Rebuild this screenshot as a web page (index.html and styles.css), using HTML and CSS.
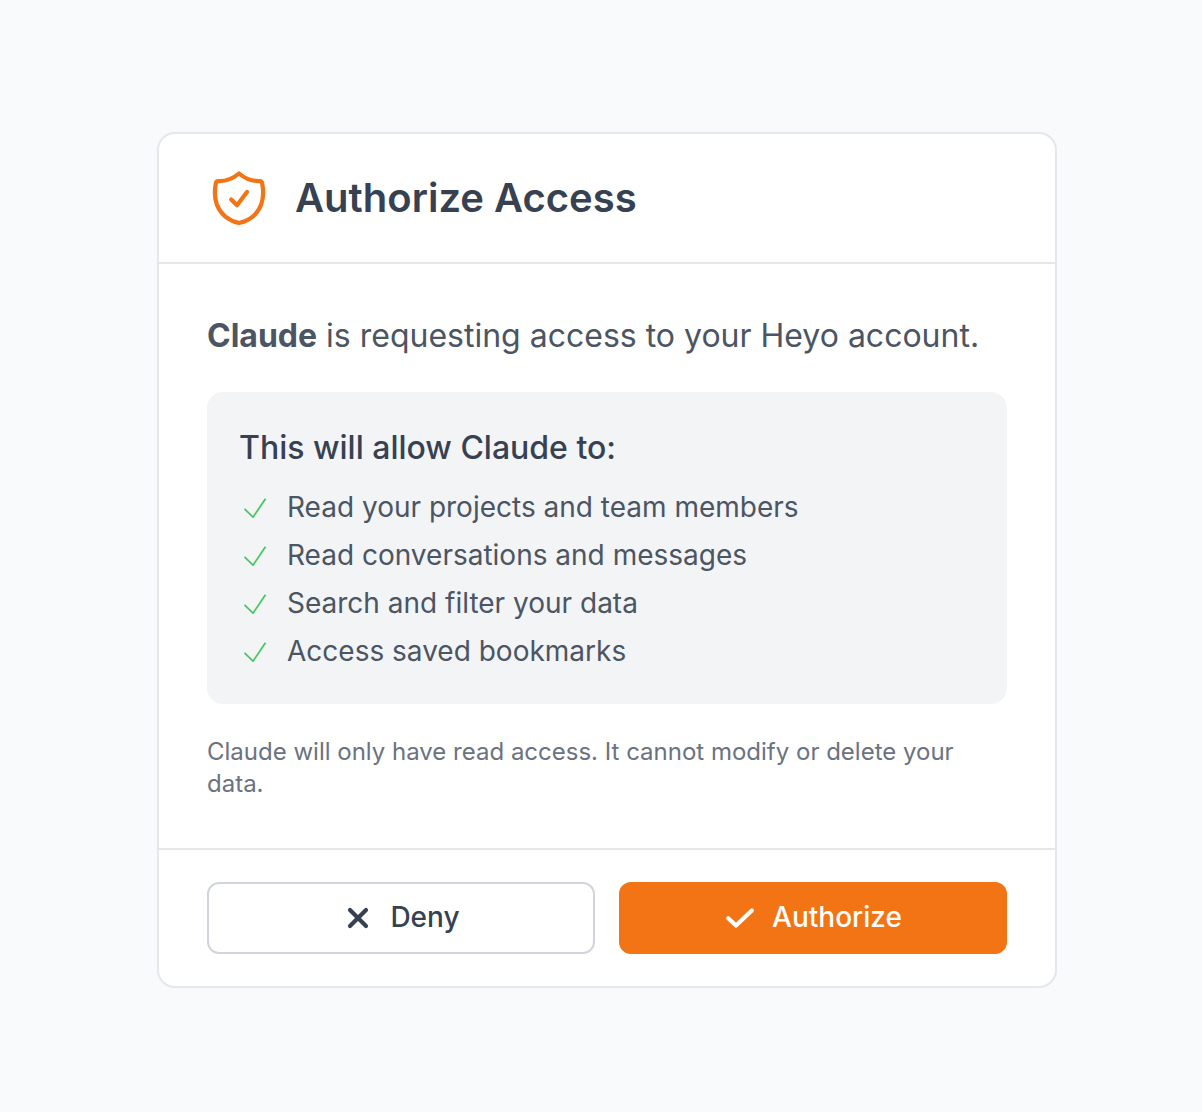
FILE: index.html
```html
<!DOCTYPE html>
<html lang="en">
<head>
    <meta charset="UTF-8">
    <meta name="viewport" content="width=device-width, initial-scale=1.0">
    <title>Authorize Access</title>
    <link rel="stylesheet" href="styles.css">
</head>
<body>
    <main class="card">
        <header class="card-header">
            <svg class="shield" viewBox="0 0 64 64" fill="none">
                <path d="M32 7.500C26 12.500 18.500 15.500 11 15Q9.500 15 9 16.500C7.200 25 7.600 32.500 9.800 38.500C13.500 48 21 54.500 32 57C43 54.500 50.500 48 54.200 38.500C56.400 32.500 56.800 25 55 16.500Q54.500 15 53 15C45.500 15.500 38 12.500 32 7.500Z"/>
                <path d="M24.200 33.500L30 39.300L40 26"/>
            </svg>
            <h1>Authorize Access</h1>
        </header>

        <section class="card-body">
            <p class="request"><strong>Claude</strong> is requesting access to your Heyo account.</p>

            <div class="permissions">
                <h2>This will allow Claude to:</h2>
                <ul>
                    <li><svg class="tick" viewBox="0 0 32 32"><path d="M5.500 16.800L14 25.200L26.500 6.800"/></svg>Read your projects and team members</li>
                    <li><svg class="tick" viewBox="0 0 32 32"><path d="M5.500 16.800L14 25.200L26.500 6.800"/></svg>Read conversations and messages</li>
                    <li><svg class="tick" viewBox="0 0 32 32"><path d="M5.500 16.800L14 25.200L26.500 6.800"/></svg>Search and filter your data</li>
                    <li><svg class="tick" viewBox="0 0 32 32"><path d="M5.500 16.800L14 25.200L26.500 6.800"/></svg>Access saved bookmarks</li>
                </ul>
            </div>

            <p class="note">Claude will only have read access. It cannot modify or delete your data.</p>
        </section>

        <footer class="card-footer">
            <button class="btn btn-deny" type="button">
                <svg class="btn-icon" viewBox="0 0 32 32"><path d="M8 8L24 24M24 8L8 24"/></svg>
                Deny
            </button>
            <button class="btn btn-authorize" type="button">
                <svg class="btn-icon" viewBox="0 0 32 32"><path d="M4.200 16.200L12 23.600L27.800 8.400"/></svg>
                Authorize
            </button>
        </footer>
    </main>
</body>
</html>
```
FILE: styles.css
```css
* {
    box-sizing: border-box;
}
body {
    margin: 0;
    padding: 132px 145px 0 157px;
    min-height: 100vh;
    background-color: #f9fafb;
    color: #4b5563;
    font-family: Inter, sans-serif;
}
h1, h2, p, ul {
    margin: 0;
    padding: 0;
}
svg {
    flex-shrink: 0;
    fill: none;
}
.card {
    height: 856px;
    background-color: #fff;
    border: 2px solid #e5e7eb;
    border-radius: 18px;
}
.card-header {
    display: flex;
    align-items: center;
    gap: 24px;
    height: 130px;
    padding: 0 48px;
    border-bottom: 2px solid #e5e7eb;
}
.shield {
    width: 64px;
    height: 64px;
    stroke: #f37414;
    stroke-width: 4.2;
    stroke-linecap: round;
    stroke-linejoin: round;
}
h1 {
    color: #374151;
    font-size: 40px;
    line-height: 56px;
    font-weight: 600;
}
.card-body {
    padding: 48px;
}
.request {
    font-size: 32px;
    line-height: 48px;
}
.request strong {
    font-weight: 700;
}
.permissions {
    margin-top: 32px;
    padding: 32px;
    height: 312px;
    background-color: #f3f4f6;
    border-radius: 16px;
}
h2 {
    margin-bottom: 16px;
    color: #374151;
    font-size: 32px;
    line-height: 48px;
    font-weight: 500;
}
ul {
    display: flex;
    flex-direction: column;
    gap: 8px;
    list-style: none;
}
li {
    display: flex;
    align-items: center;
    gap: 16px;
    padding-bottom: 2px;
    font-size: 28px;
    line-height: 38px;
}
.tick {
    width: 32px;
    height: 32px;
    margin-top: 2px;
    stroke: #48c763;
    stroke-width: 1.8;
    stroke-linejoin: round;
}
.note {
    margin-top: 32px;
    color: #6b7280;
    font-size: 24px;
    line-height: 32px;
}
.card-footer {
    display: flex;
    gap: 24px;
    padding: 32px 48px;
    border-top: 2px solid #e5e7eb;
}
.btn {
    flex: 1;
    display: flex;
    align-items: center;
    justify-content: center;
    gap: 16px;
    height: 72px;
    padding: 0 0 2px;
    border: 2px solid #d1d5db;
    border-radius: 12px;
    background-color: #fff;
    color: #374151;
    font-family: inherit;
    font-size: 28px;
    line-height: 40px;
    font-weight: 500;
}
.btn-authorize {
    border-color: #f37414;
    background-color: #f37414;
    color: #fff;
}
.btn-icon {
    width: 32px;
    height: 32px;
    margin-top: 2px;
    stroke: currentColor;
    stroke-width: 4.2;
    stroke-linecap: round;
    stroke-linejoin: round;
}
```
